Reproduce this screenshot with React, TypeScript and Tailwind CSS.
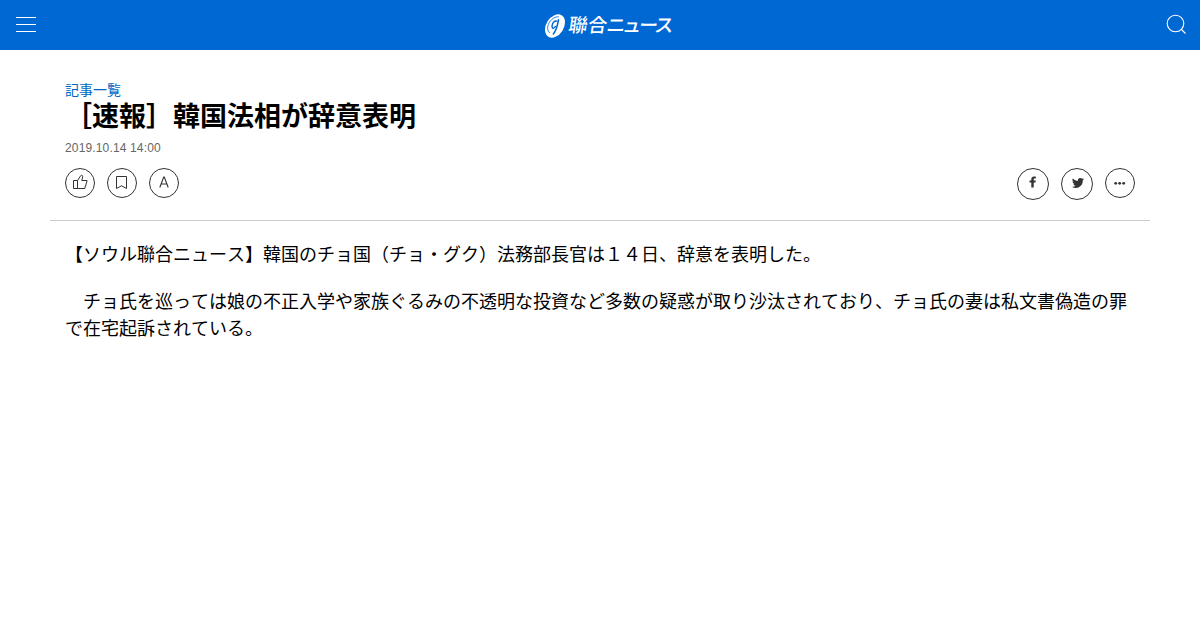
import type { ReactNode } from "react";

const paragraphs = [
  "【ソウル聯合ニュース】韓国のチョ国（チョ・グク）法務部長官は１４日、辞意を表明した。",
  "　チョ氏を巡っては娘の不正入学や家族ぐるみの不透明な投資など多数の疑惑が取り沙汰されており、チョ氏の妻は私文書偽造の罪で在宅起訴されている。",
];

function Logo() {
  return (
    <a href="#" className="flex items-center" aria-label="聯合ニュース">
      <svg width="136" height="28" viewBox="0 0 136 28" className="overflow-visible">
        <ellipse cx="11" cy="14" rx="8.8" ry="12.6" transform="rotate(32 11 14)" fill="#fff" />
        <g fill="none" stroke="#0068d2" strokeLinecap="round">
          <path d="M14.500 4.800C9.500 4.400 4.800 9.200 3.800 14.500c-.5 3 .2 5 1.600 6.200" strokeWidth=".8" />
          <path d="M12.800 9.200c-2.400-1-4.300 1.500-4.700 4.400-.4 3.200 1.600 3.500 3.400.8" strokeWidth="1.400" />
          <path d="M14.500 7.800c-.8 4.800-1.700 10-5.200 14.200" strokeWidth="1.500" />
        </g>
        <text
          x="23.500 43 61.500 77.500 94 109.500"
          y="20"
          transform="translate(3 0) skewX(-8)"
          className="fill-white font-['Noto_Sans_CJK_JP',sans-serif] text-[19px] font-medium"
        >
          聯合ニュース
        </text>
      </svg>
    </a>
  );
}

function Header() {
  return (
    <header className="grid h-[50px] grid-cols-3 items-start bg-[#0068d2] text-white">
      <button type="button" aria-label="メニュー" className="ml-4 mt-[17px] flex w-5 flex-col gap-1.5">
        <span className="h-px w-full bg-white" />
        <span className="h-px w-full bg-white" />
        <span className="h-px w-full bg-white" />
      </button>
      <div className="mt-3 flex justify-center pl-[23px]">
        <Logo />
      </div>
      <button type="button" aria-label="検索" className="mr-3 mt-[13px] justify-self-end">
        <svg width="22" height="22" viewBox="0 0 22 22" fill="none" stroke="currentColor" strokeWidth="1.100">
          <circle cx="9.500" cy="10.500" r="8.300" />
          <path d="M15.500 16.500l4 4" />
        </svg>
      </button>
    </header>
  );
}

function CircleButton({ label, large, children }: { label: string; large?: boolean; children: ReactNode }) {
  return (
    <button
      type="button"
      aria-label={label}
      className={`flex items-center justify-center rounded-full border border-[#333] text-[#333] ${large ? "size-8" : "size-[30px]"}`}
    >
      {children}
    </button>
  );
}

function Toolbar() {
  return (
    <div className="flex h-8 items-start justify-between">
      <div className="flex gap-3">
        <CircleButton label="いいね">
          <svg width="16" height="16" viewBox="0 0 16 16" fill="none" stroke="currentColor" strokeWidth="1" className="-mt-0.5">
            <path d="M1.500 6.500h4v8h-4zM5.500 6.500l3.200-4.800c.7-.9 2.300-.3 2 .9l-.9 3.900h5.200l-.5 2.800h-.4l-.3 2.600h-.5l-.4 2.600H5.500" />
          </svg>
        </CircleButton>
        <CircleButton label="ブックマーク">
          <svg width="12" height="14" viewBox="0 0 12 14" fill="none" stroke="currentColor" strokeWidth="1" className="-mt-0.5">
            <path d="M.5 1.500h10v12l-5-2.700-5 2.700z" />
          </svg>
        </CircleButton>
        <CircleButton label="文字サイズ">
          <svg width="10" height="12" viewBox="0 0 10 12" fill="none" stroke="currentColor" strokeWidth="1.100" className="-mt-0.5">
            <path d="M.8 11.500L4.700 1h.6l3.900 10.500M2.200 8h5.600" />
          </svg>
        </CircleButton>
      </div>
      <div className="flex gap-3">
        <CircleButton label="Facebook" large>
          <svg width="8" height="12" viewBox="0 0 8 12" fill="currentColor" className="-mt-1">
            <path d="M2.300 11.500V6.600H.5V4.500h1.800V3.200C2.300 1.400 3.300.5 5 .5h1.800v2H5.600c-.7 0-.9.3-.9.900v1.100h2.100l-.3 2.100H4.700v4.900z" />
          </svg>
        </CircleButton>
        <CircleButton label="Twitter" large>
          <svg width="12" height="10" viewBox="1 3 22 18" fill="currentColor" className="-mt-0.5 ml-px">
            <path d="M23 5.100a9 9 0 0 1-2.600.7 4.500 4.500 0 0 0 2-2.500 9 9 0 0 1-2.900 1.100 4.500 4.500 0 0 0-7.700 4.100A12.800 12.800 0 0 1 2.500 3.800a4.500 4.500 0 0 0 1.400 6 4.500 4.500 0 0 1-2-.6 4.500 4.500 0 0 0 3.600 4.500 4.500 4.500 0 0 1-2 .1 4.500 4.500 0 0 0 4.200 3.100A9 9 0 0 1 1 18.800a12.800 12.800 0 0 0 19.700-11.400A9 9 0 0 0 23 5.100z" />
          </svg>
        </CircleButton>
        <CircleButton label="その他">
          <svg width="12" height="4" viewBox="0 0 12 4" fill="currentColor">
            <circle cx="1.700" cy="2.300" r="1.400" />
            <circle cx="5.700" cy="2.300" r="1.400" />
            <circle cx="9.700" cy="2.300" r="1.400" />
          </svg>
        </CircleButton>
      </div>
    </div>
  );
}

export default function App() {
  return (
    <div className="min-h-[630px] bg-white font-['Liberation_Sans','Noto_Sans_CJK_JP',sans-serif] text-black [font-kerning:none]">
      <Header />
      <main className="mx-auto w-[1100px] pt-[30px]">
        <div className="border-b border-[#ccc] px-[15px] pb-5">
          <a href="#" className="block h-5 text-sm leading-5 text-[#0068c3]">
            記事一覧
          </a>
          <h1 className="h-8 pt-px text-[27px] leading-8 font-bold">［速報］韓国法相が辞意表明</h1>
          <p className="mt-[7px] mb-[11px] text-xs leading-[18px] tracking-[0.15px] text-[#666]">2019.10.14 14:00</p>
          <Toolbar />
        </div>
        <article className="flex flex-col gap-5 px-[15px] pt-[21px] text-lg leading-[27px]">
          {paragraphs.map((text) => (
            <p key={text}>{text}</p>
          ))}
        </article>
      </main>
    </div>
  );
}
